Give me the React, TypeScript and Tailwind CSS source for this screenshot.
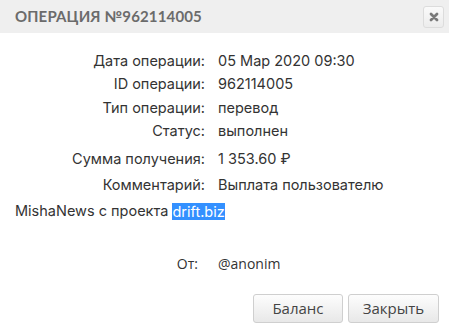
import React from "react";

const rows: [string, string][] = [
  ["Дата операции:", "05 Мар 2020 09:30"],
  ["ID операции:", "962114005"],
  ["Тип операции:", "перевод"],
  ["Статус:", "выполнен"],
];

export default function App() {
  return (
    <div className="w-[449px] h-[333px] bg-white flex flex-col overflow-hidden text-[#333] font-['Inter',sans-serif]">
      {/* Header */}
      <div className="h-[33px] shrink-0 bg-[#efefef] flex items-center justify-between pl-[15px] pr-[5px]">
        <span className="text-[15px] font-bold tracking-[0.01em] text-[#6b6b6b] font-['Lato',sans-serif]">
          ОПЕРАЦИЯ №962114005
        </span>
        <button className="w-[21px] h-[22px] rounded-[3px] border border-[#dcdcdc] bg-gradient-to-b from-[#fafafa] to-[#ececec] flex items-center justify-center">
          <svg width="10" height="10" viewBox="0 0 10 10">
            <path d="M2 2 L8 8 M8 2 L2 8" stroke="#7a7a7a" strokeWidth="2.8" strokeLinecap="round" />
          </svg>
        </button>
      </div>

      {/* Details */}
      <div className="pt-[16px] text-[14.5px]">
        {rows.map(([label, value]) => (
          <div key={label} className="h-[23.5px] flex items-center">
            <div className="w-[205px] text-right">{label}</div>
            <div className="pl-[13px]">{value}</div>
          </div>
        ))}
        <div className="mt-[3px] h-[26px] flex items-center">
          <div className="w-[205px] text-right">Сумма получения:</div>
          <div className="pl-[13px]">1 353.60 ₽</div>
        </div>
        <div className="h-[26px] flex items-center">
          <div className="w-[205px] text-right">Комментарий:</div>
          <div className="pl-[13px]">Выплата пользователю</div>
        </div>
        <div className="h-[26px] flex items-center pl-[15px]">
          MishaNews с проекта&nbsp;
          <span className="bg-[#3390ff] text-white leading-[17px]">drift.biz</span>
        </div>
      </div>

      {/* Sender */}
      <div className="mt-[28px] h-[22px] flex items-center text-[14px] font-['Open_Sans',sans-serif]">
        <div className="w-[198px] text-right">От:</div>
        <div className="pl-[20px]">@anonim</div>
      </div>

      {/* Footer buttons */}
      <div className="mt-auto mb-[10px] flex justify-end gap-[5px] pr-[10px] font-['Open_Sans',sans-serif]">
        <button className="w-[90px] h-[29px] rounded-[3px] border border-[#cfcfcf] bg-gradient-to-b from-[#fdfdfd] to-[#e8e8e8] text-[15px] text-[#444]">
          Баланс
        </button>
        <button className="w-[91px] h-[29px] rounded-[3px] border border-[#cfcfcf] bg-gradient-to-b from-[#fdfdfd] to-[#e8e8e8] text-[15px] text-[#444]">
          Закрыть
        </button>
      </div>
    </div>
  );
}
